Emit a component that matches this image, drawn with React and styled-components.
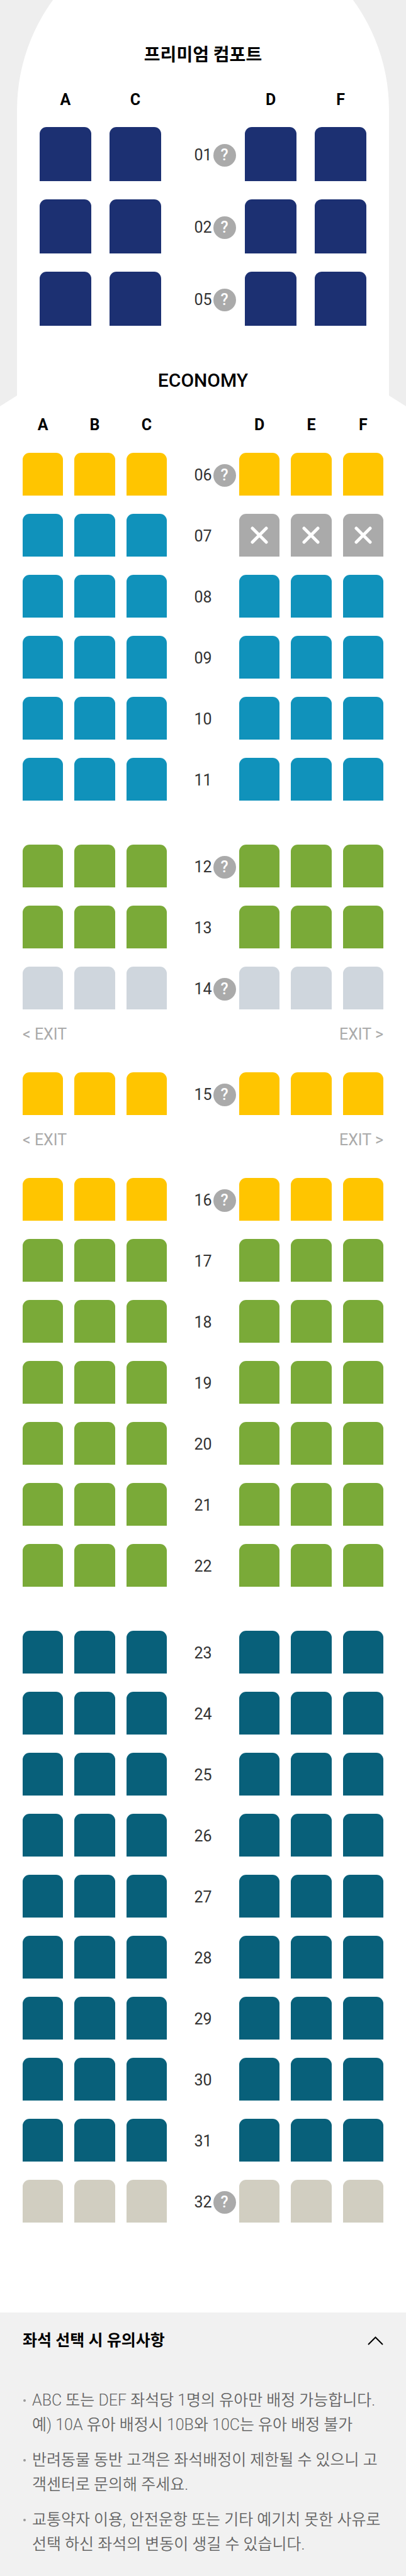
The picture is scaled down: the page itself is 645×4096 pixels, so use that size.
import React, { useState } from "react";
import styled, { createGlobalStyle, ThemeProvider } from "styled-components";

const theme = {
  navy: "#1c3072",
  yellow: "#ffc500",
  blue: "#1092bb",
  green: "#7aaa38",
  silver: "#cfd6dd",
  teal: "#08607a",
  sand: "#d1cec1",
  taken: "#aaaaaa",
};

const GlobalStyle = createGlobalStyle`
  * { box-sizing: border-box; }
  body {
    margin: 0;
    background: #eeeeee;
    color: #000;
    font-family: Roboto, "Noto Sans CJK KR", sans-serif;
  }
  button {
    border: 0;
    padding: 0;
    margin: 0;
    background: none;
    color: inherit;
    font: inherit;
    cursor: pointer;
  }
`;

const Page = styled.main`
  overflow: hidden;
`;

const Nose = styled.section`
  margin: -121px 27px 0;
  padding: 188px 36px 0;
  background: #fff;
  border-radius: 50% 50% 0 0 / 296px 296px 0 0;
`;

const Economy = styled.section`
  padding: 66px 36px 143px;
  background: #fff;
  clip-path: polygon(
    27px 0,
    calc(100% - 27px) 0,
    calc(100% - 27px) 111px,
    100% 128px,
    100% 100%,
    0 100%,
    0 128px,
    27px 111px
  );
`;

const CabinTitle = styled.h2`
  margin: 0;
  font-size: ${(p) => (p.$latin ? 30 : 28)}px;
  line-height: 42px;
  font-weight: ${(p) => (p.$latin ? 500 : 700)};
  text-align: center;
`;

const Line = styled.div`
  display: grid;
  grid-template-columns: 1fr ${(p) => (p.$wide ? 133 : 115)}px 1fr;
`;

const Letters = styled(Line)`
  padding: ${(p) => (p.$wide ? "35px 0 28px" : "35px 0 29px")};
`;

const Side = styled.div`
  display: grid;
  grid-auto-flow: column;
  grid-auto-columns: 1fr;
  column-gap: ${(p) => (p.$wide ? 29 : 18)}px;
`;

const Letter = styled.span`
  font-size: 25px;
  line-height: 30px;
  font-weight: 700;
  text-align: center;
`;

const Rows = styled.div`
  display: flex;
  flex-direction: column;
  gap: 29px;
`;

const Blocks = styled.div`
  display: flex;
  flex-direction: column;
  gap: 70px;
`;

const Seat = styled.button`
  display: flex;
  align-items: center;
  justify-content: center;
  height: ${(p) => (p.$wide ? 86 : 68)}px;
  border-radius: 11px 11px 0 0;
  background: ${(p) => p.theme[p.$tone]};
`;

const Aisle = styled.div`
  display: grid;
  grid-template-columns: 1fr auto 1fr;
  align-items: center;
  padding-top: 4px;
`;

const RowNumber = styled.span`
  grid-column: 2;
  color: #333;
  font-size: 25px;
  line-height: 30px;
  font-weight: 400;
`;

const HelpButton = styled.button`
  width: 36px;
  height: 36px;
  margin-left: 2px;
  border-radius: 50%;
  background: #aaaaaa;
  color: #fff;
  font-size: 25px;
  line-height: 36px;
  font-weight: 500;
`;

const Exit = styled.div`
  display: flex;
  justify-content: space-between;
  margin: -4px 0;
  padding-bottom: 20px;
  color: #aaaaaa;
  font-size: 25px;
  line-height: 30px;
`;

const Notice = styled.footer`
  padding: 20px 36px 31px;
  background: #f1f1f1;
`;

const NoticeTitle = styled.h3`
  margin: 0;
  font-size: 25px;
  line-height: 50px;
  font-weight: 700;
`;

const NoticeToggle = styled.button`
  display: flex;
  align-items: center;
  justify-content: space-between;
  width: 100%;
  height: 50px;
  text-align: left;
`;

const Chevron = styled.svg`
  width: 25px;
  height: 14px;
  transform: ${(p) => (p.$open ? "none" : "rotate(180deg)")};
`;

const NoticeList = styled.ul`
  display: flex;
  flex-direction: column;
  gap: 17px;
  margin: 0;
  padding: 50px 0 0;
  list-style: none;
`;

const NoticeItem = styled.li`
  display: flex;
  color: #666;
  font-size: 25px;
  line-height: 39px;
  font-weight: 350;
  word-break: break-all;

  &::before {
    content: "";
    flex: none;
    width: 4px;
    height: 4px;
    margin: 18px 10px 0 1px;
    border-radius: 50%;
    background: #999;
  }
`;

const premiumRows = ["01", "02", "05"];

const range = (from, to, tone) =>
  Array.from({ length: to - from + 1 }, (_, i) => ({
    number: String(from + i).padStart(2, "0"),
    tone,
  }));

const economyBlocks = [
  [
    { number: "06", tone: "yellow", help: true },
    { number: "07", tone: "blue", rightTaken: true },
    ...range(8, 11, "blue"),
  ],
  [
    { number: "12", tone: "green", help: true },
    { number: "13", tone: "green" },
    { number: "14", tone: "silver", help: true },
    { exit: "front" },
    { number: "15", tone: "yellow", help: true },
    { exit: "rear" },
    { number: "16", tone: "yellow", help: true },
    ...range(17, 22, "green"),
  ],
  [...range(23, 31, "teal"), { number: "32", tone: "sand", help: true }],
];

const notices = [
  ["ABC 또는 DEF 좌석당 1명의 유아만 배정 가능합니다.", "예) 10A 유아 배정시 10B와 10C는 유아 배정 불가"],
  ["반려동물 동반 고객은 좌석배정이 제한될 수 있으니 고객센터로 문의해 주세요."],
  ["교통약자 이용, 안전운항 또는 기타 예기치 못한 사유로 선택 하신 좌석의 변동이 생길 수 있습니다."],
];

function TakenMark() {
  return (
    <svg width="28" height="28" viewBox="0 0 28 28" fill="none" stroke="#fff" strokeWidth="5" strokeLinecap="round" aria-hidden="true">
      <path d="M3 3l22 22M25 3L3 25" />
    </svg>
  );
}

function SeatGroup({ letters, number, tone, taken, wide }) {
  return (
    <Side $wide={wide}>
      {letters.map((letter) => (
        <Seat
          key={letter}
          type="button"
          aria-label={number + letter}
          disabled={taken}
          $wide={wide}
          $tone={taken ? "taken" : tone}
        >
          {taken && <TakenMark />}
        </Seat>
      ))}
    </Side>
  );
}

function SeatRow({ left, right, number, tone, help, rightTaken, wide }) {
  return (
    <Line $wide={wide}>
      <SeatGroup letters={left} number={number} tone={tone} wide={wide} />
      <Aisle>
        <RowNumber>{number}</RowNumber>
        {help && <HelpButton type="button">?</HelpButton>}
      </Aisle>
      <SeatGroup letters={right} number={number} tone={tone} taken={rightTaken} wide={wide} />
    </Line>
  );
}

function LetterRow({ left, right, wide }) {
  return (
    <Letters $wide={wide}>
      <Side $wide={wide}>{left.map((l) => <Letter key={l}>{l}</Letter>)}</Side>
      <span />
      <Side $wide={wide}>{right.map((l) => <Letter key={l}>{l}</Letter>)}</Side>
    </Letters>
  );
}

export default function App() {
  const [open, setOpen] = useState(true);
  return (
    <ThemeProvider theme={theme}>
      <GlobalStyle />
      <Page>
        <Nose>
          <CabinTitle>프리미엄 컴포트</CabinTitle>
          <LetterRow left={["A", "C"]} right={["D", "F"]} wide />
          <Rows>
            {premiumRows.map((number) => (
              <SeatRow key={number} left={["A", "C"]} right={["D", "F"]} number={number} tone="navy" help wide />
            ))}
          </Rows>
        </Nose>
        <Economy>
          <CabinTitle $latin>ECONOMY</CabinTitle>
          <LetterRow left={["A", "B", "C"]} right={["D", "E", "F"]} />
          <Blocks>
            {economyBlocks.map((rows, i) => (
              <Rows key={i}>
                {rows.map((row) =>
                  row.exit ? (
                    <Exit key={row.exit}>
                      <span>&lt; EXIT</span>
                      <span>EXIT &gt;</span>
                    </Exit>
                  ) : (
                    <SeatRow key={row.number} left={["A", "B", "C"]} right={["D", "E", "F"]} {...row} />
                  )
                )}
              </Rows>
            ))}
          </Blocks>
        </Economy>
        <Notice>
          <NoticeTitle>
            <NoticeToggle type="button" aria-expanded={open} onClick={() => setOpen(!open)}>
              좌석 선택 시 유의사항
              <Chevron $open={open} viewBox="0 0 25 14" fill="none" stroke="#000" strokeWidth="2" aria-hidden="true">
                <path d="M1 13L12.5 1.5L24 13" />
              </Chevron>
            </NoticeToggle>
          </NoticeTitle>
          {open && (
            <NoticeList>
              {notices.map((lines) => (
                <NoticeItem key={lines[0]}>
                  <span>
                    {lines.map((line, i) => (
                      <React.Fragment key={line}>
                        {i > 0 && <br />}
                        {line}
                      </React.Fragment>
                    ))}
                  </span>
                </NoticeItem>
              ))}
            </NoticeList>
          )}
        </Notice>
      </Page>
    </ThemeProvider>
  );
}
